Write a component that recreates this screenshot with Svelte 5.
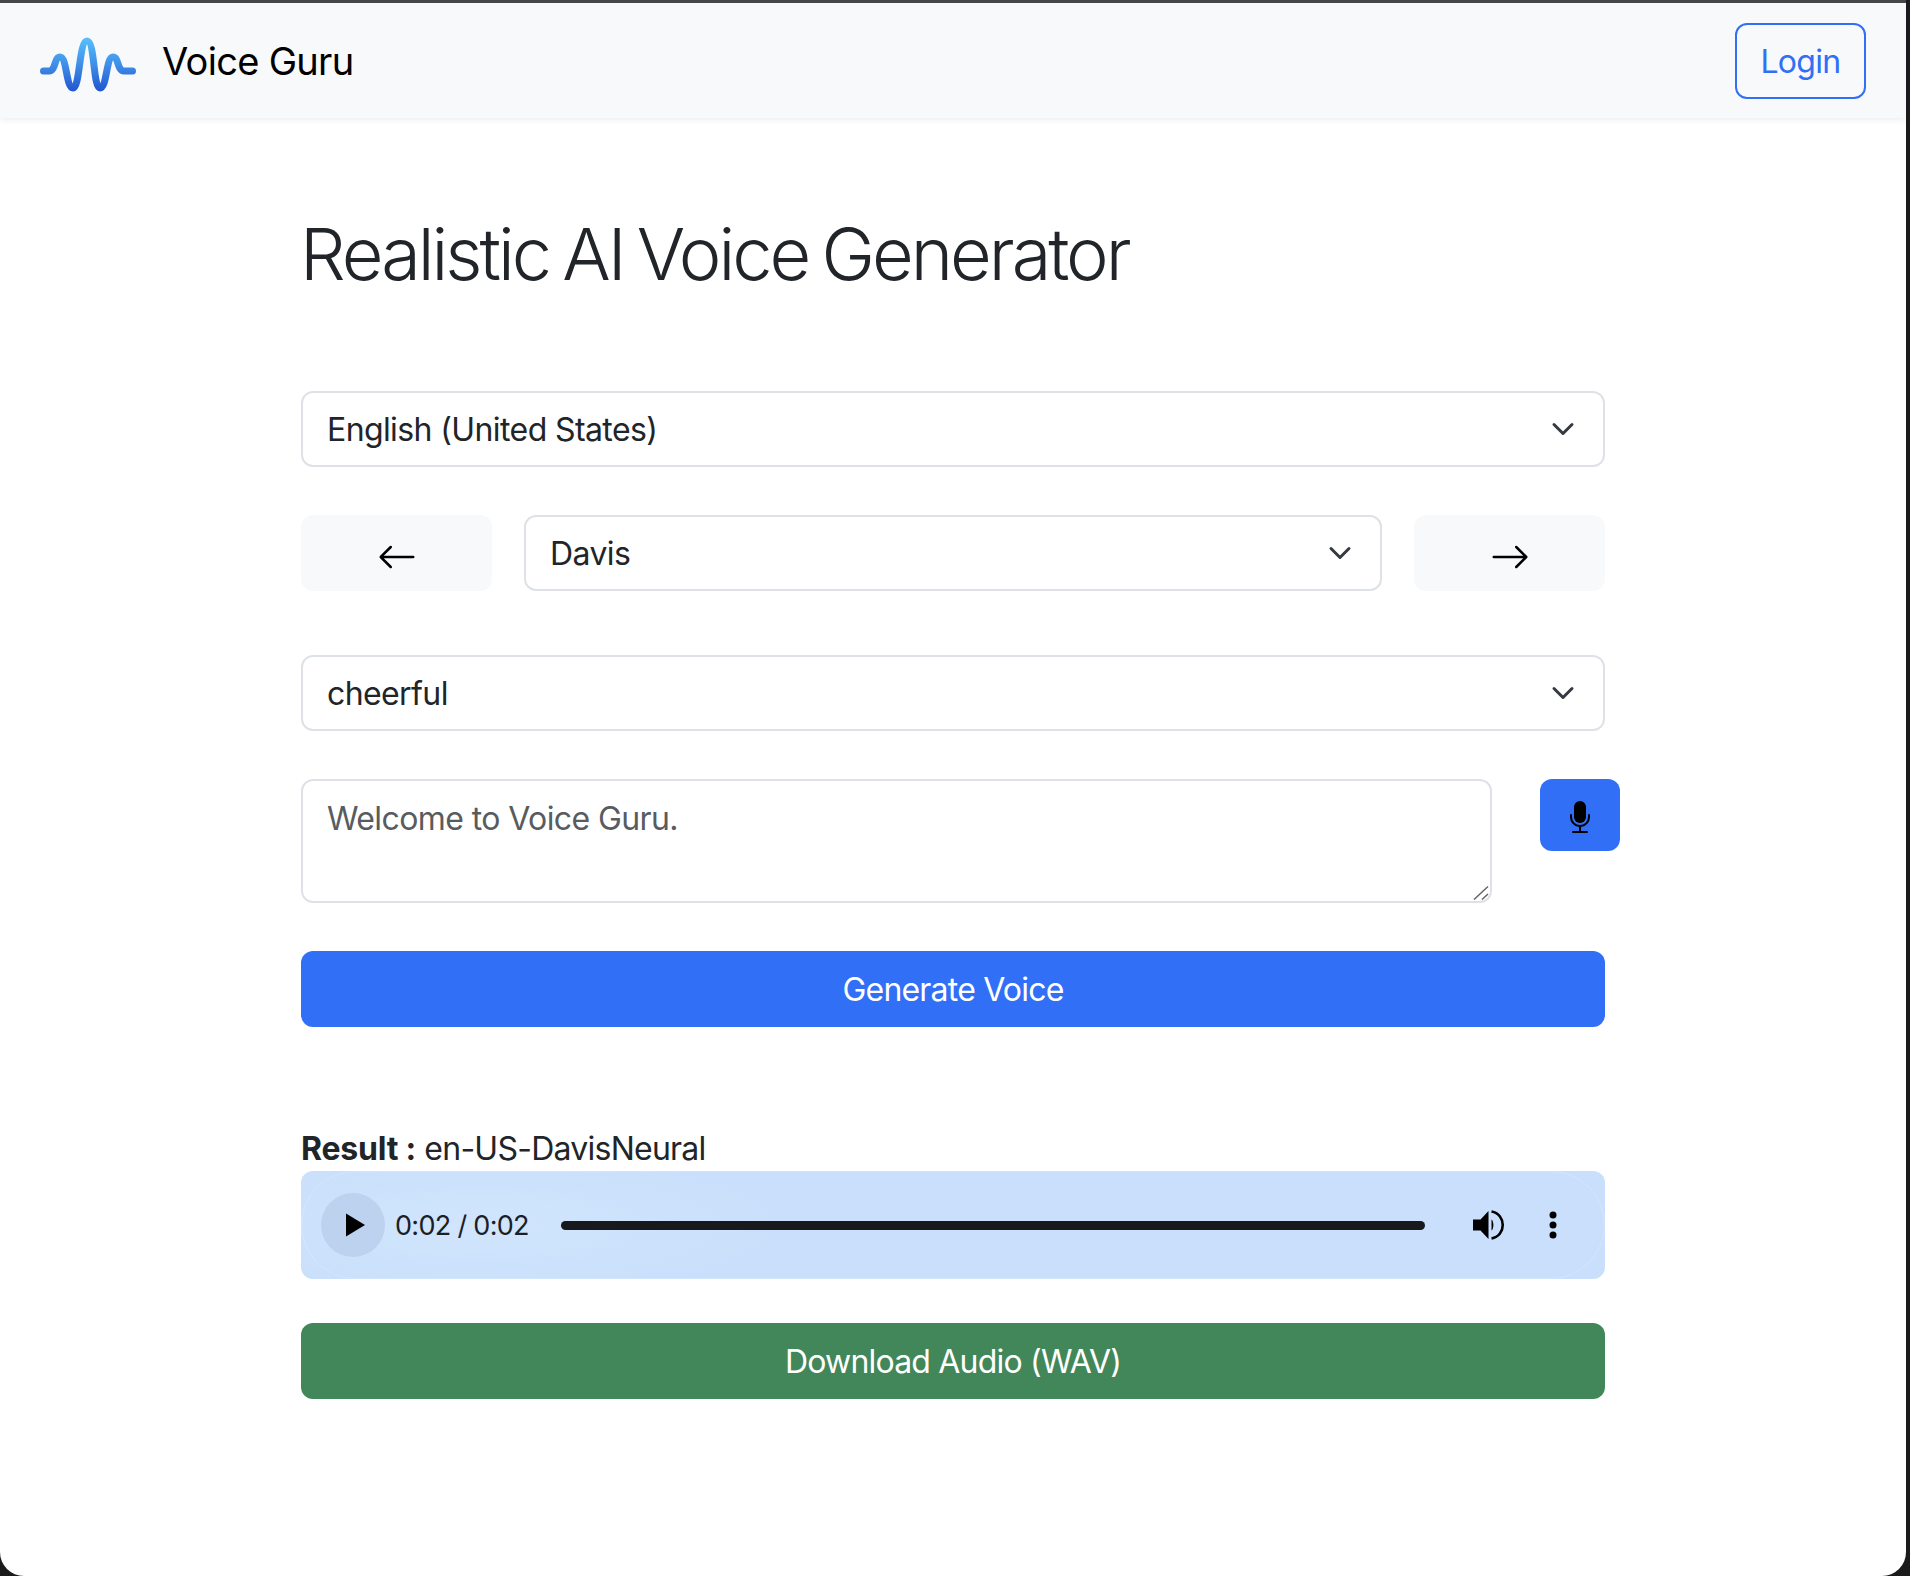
<script>
  let language = $state('English (United States)');
  let voice = $state('Davis');
  let style = $state('cheerful');
  let text = $state('');

  const chevron = "url(\"data:image/svg+xml,%3csvg xmlns='http://www.w3.org/2000/svg' viewBox='0 0 16 16'%3e%3cpath fill='none' stroke='%23343a40' stroke-linecap='round' stroke-linejoin='round' stroke-width='2' d='m2 5 6 6 6-6'/%3e%3c/svg%3e\")";
</script>

<div class="window" style="--chevron: {chevron}">
  <nav class="navbar">
    <a class="brand" href="#top">
      <svg class="logo" width="96" height="56" viewBox="0 0 96 56" aria-hidden="true">
        <defs>
          <linearGradient id="wave" gradientUnits="userSpaceOnUse" x1="0" y1="2" x2="0" y2="55">
            <stop offset="0" stop-color="#56c0fa" />
            <stop offset="0.5" stop-color="#3f8fe8" />
            <stop offset="1" stop-color="#2156cf" />
          </linearGradient>
        </defs>
        <path
          d="M3.5 35 H9 C16 35 14 21 20 21 C27 21 26 52 33 52 C40 52 39 5 47 5 C55 5 53 52 60 52 C67 52 66 21 73 21 C79 21 77 35 84 35 H92.500"
          fill="none"
          stroke="url(#wave)"
          stroke-width="7"
          stroke-linecap="round"
          stroke-linejoin="round"
        />
      </svg>
      <span>Voice Guru</span>
    </a>
    <button class="login" type="button">Login</button>
  </nav>

  <main>
    <h1>Realistic AI Voice Generator</h1>

    <select class="field" bind:value={language}>
      <option>English (United States)</option>
    </select>

    <div class="voice-row">
      <button class="step" type="button" aria-label="Previous voice">
        <svg width="40" height="40" viewBox="0 0 16 16" fill="currentColor">
          <path fill-rule="evenodd" d="M15 8a.5.5 0 0 0-.5-.5H2.707l3.147-3.146a.5.5 0 1 0-.708-.708l-4 4a.5.5 0 0 0 0 .708l4 4a.5.5 0 0 0 .708-.708L2.707 8.5H14.500A.5.5 0 0 0 15 8" />
        </svg>
      </button>
      <select class="field" bind:value={voice}>
        <option>Davis</option>
      </select>
      <button class="step" type="button" aria-label="Next voice">
        <svg width="40" height="40" viewBox="0 0 16 16" fill="currentColor">
          <path fill-rule="evenodd" d="M1 8a.5.5 0 0 1 .5-.5h11.793l-3.147-3.146a.5.5 0 0 1 .708-.708l4 4a.5.5 0 0 1 0 .708l-4 4a.5.5 0 0 1-.708-.708L13.293 8.500H1.500A.5.5 0 0 1 1 8" />
        </svg>
      </button>
    </div>

    <select class="field style-select" bind:value={style}>
      <option>cheerful</option>
    </select>

    <div class="text-row">
      <div class="text-wrap">
        <textarea placeholder="Welcome to Voice Guru." bind:value={text}></textarea>
        <svg class="grip" width="16" height="15" viewBox="0 0 16 15" aria-hidden="true">
          <path d="M1 14.500 L15 1.500 M9 14.500 L15 9" fill="none" stroke="#666" stroke-width="1.500" />
        </svg>
      </div>
      <button class="mic" type="button" aria-label="Record">
        <svg width="32" height="32" viewBox="0 0 16 16" fill="currentColor">
          <path d="M5 3a3 3 0 0 1 6 0v5a3 3 0 0 1-6 0z" />
          <path d="M3.500 6.500A.5.5 0 0 1 4 7v1a4 4 0 0 0 8 0V7a.5.5 0 0 1 1 0v1a5 5 0 0 1-4.500 4.975V15h3a.5.5 0 0 1 0 1h-7a.5.5 0 0 1 0-1h3v-2.025A5 5 0 0 1 3 8V7a.5.5 0 0 1 .5-.5" />
        </svg>
      </button>
    </div>

    <button class="wide primary" type="button">Generate Voice</button>

    <p class="result"><strong>Result :</strong> en-US-DavisNeural</p>

    <div class="player">
      <button class="play" type="button" aria-label="Play">
        <svg width="20" height="24" viewBox="0 0 20 24" fill="currentColor"><path d="M1 0.500 L20 12 L1 23.500 Z" /></svg>
      </button>
      <span class="time">0:02 / 0:02</span>
      <div class="track"></div>
      <svg class="volume" width="32" height="30" viewBox="0 0 32 30" aria-hidden="true">
        <path d="M0 9.500 H7.500 L15.500 1 V29 L7.500 20.500 H0 Z" fill="currentColor" />
        <path d="M18.500 9.500 C21 11 21 19 18.500 20.500 Z" fill="currentColor" />
        <path d="M18.500 1.500 C33.500 4 33.500 26 18.500 28.500" fill="none" stroke="currentColor" stroke-width="2.600" />
      </svg>
      <svg class="more" width="8" height="28" viewBox="0 0 8 28" fill="currentColor" aria-hidden="true">
        <circle cx="4" cy="4" r="3.500" />
        <circle cx="4" cy="14" r="3.500" />
        <circle cx="4" cy="24" r="3.500" />
      </svg>
    </div>

    <button class="wide success" type="button">Download Audio (WAV)</button>
  </main>
</div>

<style>
  :global(body) {
    margin: 0;
    background: #1b1b1d;
    font-family: Inter, 'Liberation Sans', sans-serif;
    color: #212529;
  }

  .window {
    box-sizing: border-box;
    width: 1906px;
    height: 1576px;
    border-top: 3px solid #47474a;
    background: #fff;
    border-radius: 0 0 24px 24px;
    overflow: hidden;
  }

  .navbar {
    display: flex;
    align-items: center;
    justify-content: space-between;
    height: 115px;
    padding: 0 40px;
    background: #f8f9fb;
    box-shadow: 0 2px 6px rgba(0, 0, 0, 0.07);
    position: relative;
  }

  .brand {
    display: flex;
    align-items: center;
    gap: 26px;
    color: #000;
    font-size: 38px;
    letter-spacing: -0.7px;
    text-decoration: none;
  }

  .logo {
    display: block;
    margin-top: 7px;
  }

  .login {
    width: 131px;
    height: 76px;
    padding-top: 2px;
    border: 2px solid #316ff6;
    border-radius: 12px;
    background: transparent;
    color: #316ff6;
    font: 32px Inter, 'Liberation Sans', sans-serif;
    letter-spacing: -0.7px;
  }

  main {
    width: 1304px;
    margin: 0 auto;
  }

  h1 {
    margin: 93px 0 94px -1px;
    font-size: 72px;
    font-weight: 300;
    line-height: 1.2;
    letter-spacing: -3px;
    word-spacing: -4px;
  }

  .field,
  textarea {
    box-sizing: border-box;
    border: 2px solid #dee2e6;
    border-radius: 12px;
    background-color: #fff;
    color: #212529;
    font: 32px/48px Inter, 'Liberation Sans', sans-serif;
    letter-spacing: -0.6px;
    outline: none;
  }

  .field {
    display: block;
    width: 100%;
    height: 76px;
    padding: 2px 72px 0 24px;
    appearance: none;
    background-image: var(--chevron);
    background-repeat: no-repeat;
    background-position: right 24px center;
    background-size: 32px 24px;
  }

  .voice-row {
    display: grid;
    grid-template-columns: 191px 1fr 191px;
    gap: 32px;
    margin-top: 48px;
  }

  .step {
    display: flex;
    align-items: center;
    justify-content: center;
    height: 76px;
    padding: 8px 0 0;
    border: 0;
    border-radius: 12px;
    background: #f8f9fa;
    color: #000;
  }

  .style-select {
    margin-top: 64px;
  }

  .text-row {
    display: flex;
    align-items: flex-start;
    gap: 48px;
    margin-top: 48px;
    margin-right: -15px;
  }

  .text-wrap {
    position: relative;
    width: 1191px;
  }

  textarea {
    display: block;
    width: 100%;
    height: 124px;
    padding: 14px 24px 10px;
    resize: none;
  }

  textarea::placeholder {
    color: #595c5f;
    opacity: 1;
  }

  .grip {
    position: absolute;
    right: 3px;
    bottom: 3px;
  }

  .mic {
    display: flex;
    align-items: center;
    justify-content: center;
    width: 80px;
    height: 72px;
    padding: 4px 0 0;
    border: 0;
    border-radius: 12px;
    background: #316ff6;
    color: #000;
  }

  .wide {
    display: block;
    width: 100%;
    height: 76px;
    border: 0;
    border-radius: 12px;
    color: #fff;
    font: 32px Inter, 'Liberation Sans', sans-serif;
    letter-spacing: -0.8px;
  }

  .primary {
    margin-top: 48px;
    background: #316ff6;
  }

  .success {
    margin-top: 44px;
    background: #428759;
  }

  .result {
    margin: 102px 0 0;
    font-size: 32px;
    line-height: 40px;
    letter-spacing: -0.75px;
  }

  .result strong {
    letter-spacing: -0.2px;
  }

  .player {
    display: flex;
    align-items: center;
    position: relative;
    height: 108px;
    margin-top: 2px;
    padding: 0 48px 0 20px;
    box-sizing: border-box;
    border-radius: 12px;
    background: radial-gradient(ellipse 300px 70px at 180px 50%, #d1e6fd, transparent), #c9dffb;
    color: #000;
  }

  .player::after {
    content: '';
    position: absolute;
    inset: 0;
    border: 1px solid rgba(255, 255, 255, 0.2);
    border-radius: 54px;
    pointer-events: none;
  }

  .play {
    display: flex;
    align-items: center;
    justify-content: center;
    width: 64px;
    height: 64px;
    padding: 0 0 0 3px;
    border: 0;
    border-radius: 50%;
    background: #bcd2ee;
    color: #000;
  }

  .time {
    margin-left: 10px;
    font-size: 27px;
    letter-spacing: -0.7px;
    color: #1b2026;
    white-space: nowrap;
  }

  .track {
    flex: 1;
    height: 9px;
    margin: 0 48px 0 32px;
    border-radius: 5px;
    background: #18191d;
  }

  .more {
    margin-left: 44px;
  }
</style>
